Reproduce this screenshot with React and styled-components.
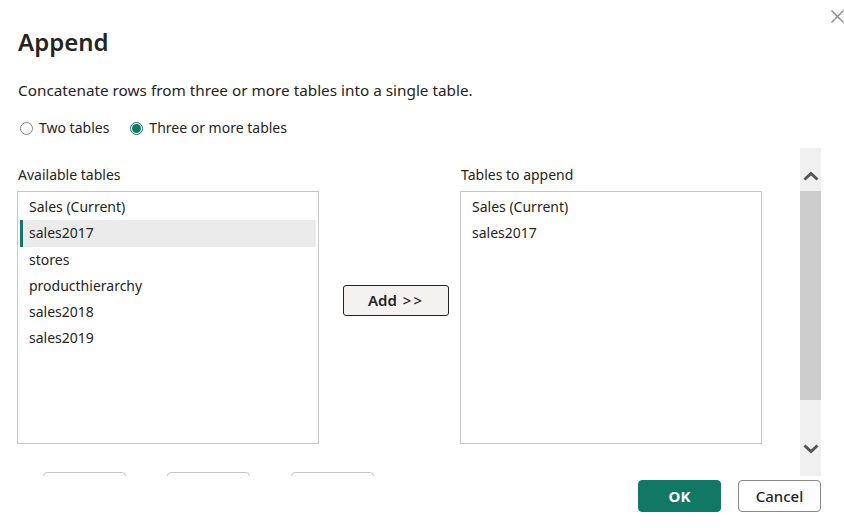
import styled, { createGlobalStyle } from 'styled-components'

const GlobalStyle = createGlobalStyle`
  body {
    margin: 0;
    font-family: "Noto Sans", "Open Sans", sans-serif;
    color: #252423;
    background: #fff;
  }
`

const Dialog = styled.div`
  position: relative;
  width: 844px;
  height: 528px;
  background: #fff;
  overflow: hidden;
  display: flex;
  flex-direction: column;
`

const CloseBtn = styled.button`
  position: absolute;
  top: 10px;
  right: 0;
  width: 13px;
  height: 13px;
  padding: 0;
  border: none;
  background: none;
  display: flex;
`

const Header = styled.div`
  padding: 26px 0 0 18px;
`

const Title = styled.h1`
  margin: 0;
  font-size: 24px;
  line-height: 32px;
  font-weight: 600;
  color: #252423;
`

const Description = styled.p`
  margin: 22px 0 0;
  font-size: 15.3px;
  line-height: 21px;
`

const RadioRow = styled.div`
  display: flex;
  gap: 21px;
  margin-top: 17px;
  padding-left: 2px;
`

const RadioLabel = styled.label`
  display: flex;
  align-items: center;
  gap: 6px;
  font-size: 14px;
  line-height: 20px;
`

const RadioCircle = styled.span`
  width: 13px;
  height: 13px;
  border-radius: 50%;
  box-sizing: border-box;
  border: 1px solid ${p => (p.$checked ? '#117865' : '#8a8886')};
  display: flex;
  align-items: center;
  justify-content: center;

  &::after {
    content: '';
    width: 9px;
    height: 9px;
    border-radius: 50%;
    background: ${p => (p.$checked ? '#117865' : 'transparent')};
  }
`

const Body = styled.div`
  display: flex;
  margin-top: 10px;
  height: 328px;
`

const Content = styled.div`
  flex: 1;
  overflow: hidden;
  padding: 17px 0 0 17px;
`

const Columns = styled.div`
  display: grid;
  grid-template-columns: 302px 1fr 302px;
  width: 745px;
`

const Column = styled.div`
  display: flex;
  flex-direction: column;
`

const ColumnLabel = styled.div`
  font-size: 14px;
  line-height: 20px;
  padding-left: 1px;
  margin-bottom: 6px;
`

const ListBox = styled.div`
  box-sizing: border-box;
  height: 253px;
  border: 1px solid #c8c6c4;
  padding: 2px 2px 0 2px;
`

const ListItem = styled.div`
  position: relative;
  height: 26.3px;
  line-height: 26px;
  font-size: 14px;
  padding-left: 9px;
  background: ${p => (p.$selected ? '#ebebeb' : 'transparent')};

  &::before {
    content: '';
    display: ${p => (p.$selected ? 'block' : 'none')};
    position: absolute;
    left: 0;
    top: 0;
    bottom: 0;
    width: 3px;
    background: #117865;
  }
`

const Middle = styled.div`
  display: flex;
  align-items: flex-start;
  padding: 120px 0 0 24px;
`

const AddButton = styled.button`
  display: flex;
  align-items: center;
  justify-content: center;
  gap: 6px;
  width: 106px;
  height: 31px;
  padding: 0 0 1px;
  border: 1px solid #252423;
  border-radius: 3px;
  background: #f3f2f1;
  font-family: inherit;
  font-size: 15px;
  font-weight: 600;
  color: #252423;
`

const Arrows = styled.span`
  letter-spacing: 2px;
  font-weight: 500;
`

const GhostRow = styled.div`
  display: flex;
  gap: 41px;
  margin-top: 28px;
  padding-left: 26px;
`

const GhostButton = styled.div`
  width: 83px;
  height: 30px;
  box-sizing: border-box;
  border: 1px solid #c8c6c4;
  border-radius: 4px;
`

const ScrollBar = styled.div`
  width: 21px;
  margin-right: 23px;
  background: #f0f0f0;
  display: flex;
  flex-direction: column;
`

const ScrollArrow = styled.div`
  height: 43px;
  box-sizing: border-box;
  display: flex;
  justify-content: center;
  align-items: ${p => (p.$up ? 'flex-end' : 'flex-start')};
  padding: ${p => (p.$up ? '0 0 10px' : '11px 0 0')};
`

const ScrollTrack = styled.div`
  flex: 1;
  display: flex;
  flex-direction: column;
`

const ScrollThumb = styled.div`
  height: 209px;
  background: #cdcdcd;
`

const Footer = styled.div`
  display: flex;
  justify-content: flex-end;
  gap: 17px;
  padding: 4px 23px 0 0;
`

const DialogButton = styled.button`
  width: 83px;
  height: 32px;
  box-sizing: border-box;
  border-radius: 4px;
  font-family: inherit;
  font-size: 15px;
  font-weight: ${p => (p.$primary ? 700 : 500)};
  color: ${p => (p.$primary ? '#fff' : '#252423')};
  background: ${p => (p.$primary ? '#117865' : '#fff')};
  border: 1px solid ${p => (p.$primary ? '#117865' : '#8a8886')};
`

const Chevron = ({ up }) => (
  <svg width="16" height="10" viewBox="0 0 16 10">
    <path
      d={up ? 'M1.5 8.5 L8 2.5 L14.5 8.5' : 'M1.5 1.5 L8 7.5 L14.5 1.5'}
      fill="none"
      stroke="#555"
      strokeWidth="3"
    />
  </svg>
)

const available = ['Sales (Current)', 'sales2017', 'stores', 'producthierarchy', 'sales2018', 'sales2019']
const toAppend = ['Sales (Current)', 'sales2017']

export default function App() {
  return (
    <Dialog>
      <GlobalStyle />
      <CloseBtn aria-label="Close">
        <svg width="13" height="13" viewBox="0 0 13 13">
          <path d="M0.5 0.5 L12.5 12.5 M12.5 0.5 L0.5 12.5" stroke="#8a8886" strokeWidth="1.3" />
        </svg>
      </CloseBtn>
      <Header>
        <Title>Append</Title>
        <Description>Concatenate rows from three or more tables into a single table.</Description>
        <RadioRow>
          <RadioLabel>
            <RadioCircle />
            Two tables
          </RadioLabel>
          <RadioLabel>
            <RadioCircle $checked />
            Three or more tables
          </RadioLabel>
        </RadioRow>
      </Header>
      <Body>
        <Content>
          <Columns>
            <Column>
              <ColumnLabel>Available tables</ColumnLabel>
              <ListBox>
                {available.map(name => (
                  <ListItem key={name} $selected={name === 'sales2017'}>{name}</ListItem>
                ))}
              </ListBox>
            </Column>
            <Middle>
              <AddButton>Add <Arrows>&gt;&gt;</Arrows></AddButton>
            </Middle>
            <Column>
              <ColumnLabel>Tables to append</ColumnLabel>
              <ListBox>
                {toAppend.map(name => (
                  <ListItem key={name}>{name}</ListItem>
                ))}
              </ListBox>
            </Column>
          </Columns>
          <GhostRow>
            <GhostButton />
            <GhostButton />
            <GhostButton />
          </GhostRow>
        </Content>
        <ScrollBar>
          <ScrollArrow $up><Chevron up /></ScrollArrow>
          <ScrollTrack>
            <ScrollThumb />
          </ScrollTrack>
          <ScrollArrow><Chevron /></ScrollArrow>
        </ScrollBar>
      </Body>
      <Footer>
        <DialogButton $primary>OK</DialogButton>
        <DialogButton>Cancel</DialogButton>
      </Footer>
    </Dialog>
  )
}
